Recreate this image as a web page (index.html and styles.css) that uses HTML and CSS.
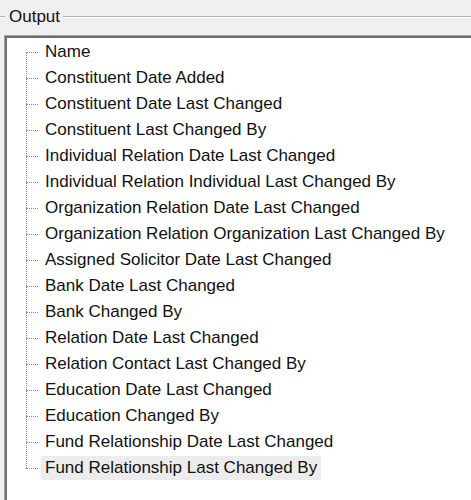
FILE: index.html
```html
<!DOCTYPE html>
<html lang="en">

<head>
    <meta charset="UTF-8">
    <title>Output</title>
    <link rel="stylesheet" href="styles.css">
</head>

<body>
    <div class="group">
        <div class="group-title">
            <span class="rule-short"></span>
            <span class="caption">Output</span>
            <span class="rule-long"></span>
        </div>

        <div class="listbox">
            <ul class="tree">
                <li><span class="label">Name</span></li>
                <li><span class="label">Constituent Date Added</span></li>
                <li><span class="label">Constituent Date Last Changed</span></li>
                <li><span class="label">Constituent Last Changed By</span></li>
                <li><span class="label">Individual Relation Date Last Changed</span></li>
                <li><span class="label">Individual Relation Individual Last Changed By</span></li>
                <li><span class="label">Organization Relation Date Last Changed</span></li>
                <li><span class="label">Organization Relation Organization Last Changed By</span></li>
                <li><span class="label">Assigned Solicitor Date Last Changed</span></li>
                <li><span class="label">Bank Date Last Changed</span></li>
                <li><span class="label">Bank Changed By</span></li>
                <li><span class="label">Relation Date Last Changed</span></li>
                <li><span class="label">Relation Contact Last Changed By</span></li>
                <li><span class="label">Education Date Last Changed</span></li>
                <li><span class="label">Education Changed By</span></li>
                <li><span class="label">Fund Relationship Date Last Changed</span></li>
                <li class="selected"><span class="label">Fund Relationship Last Changed By</span></li>
            </ul>
        </div>
    </div>
</body>

</html>
```

FILE: styles.css
```css
html,
body {
    height: 100%;
}

body {
    margin: 0;
    background-color: #f0f0f0;
    font-family: 'Liberation Sans', Arial, sans-serif;
    font-size: 17px;
    color: #111;
    overflow: hidden;
}

.group {
    padding-top: 6px;
}

.group-title {
    display: flex;
    align-items: center;
    height: 22px;
}

.rule-short {
    width: 5px;
    border-top: 1px solid #b4b4b4;
    border-bottom: 1px solid #fff;
}

.rule-long {
    flex: 1;
    border-top: 1px solid #b4b4b4;
    border-bottom: 1px solid #fff;
}

.caption {
    padding: 0 3px 0 4px;
}

.listbox {
    margin: 7px 0 0 4px;
    width: 520px;
    height: 520px;
    background-color: #fff;
    border-top: 1px solid #a0a0a0;
    border-left: 1px solid #a0a0a0;
    box-shadow: inset 2px 2px 0 #6e6e6e;
    padding: 3px 0 0 3px;
}

.tree {
    list-style: none;
    margin: 0;
    padding: 0 0 0 33px;
    position: relative;
}

/* vertical connector */
.tree::before {
    content: "";
    position: absolute;
    left: 18px;
    top: 13px;
    height: 416px;
    border-left: 1px dotted #8a8a8a;
}

.tree li {
    position: relative;
    height: 26px;
    display: flex;
    align-items: center;
}

/* horizontal connector */
.tree li::before {
    content: "";
    position: absolute;
    left: -15px;
    top: 13px;
    width: 12px;
    border-top: 1px dotted #8a8a8a;
}

.label {
    padding: 0 4px;
    line-height: 24px;
    white-space: nowrap;
}

.selected .label {
    background-color: #ececec;
}
```
